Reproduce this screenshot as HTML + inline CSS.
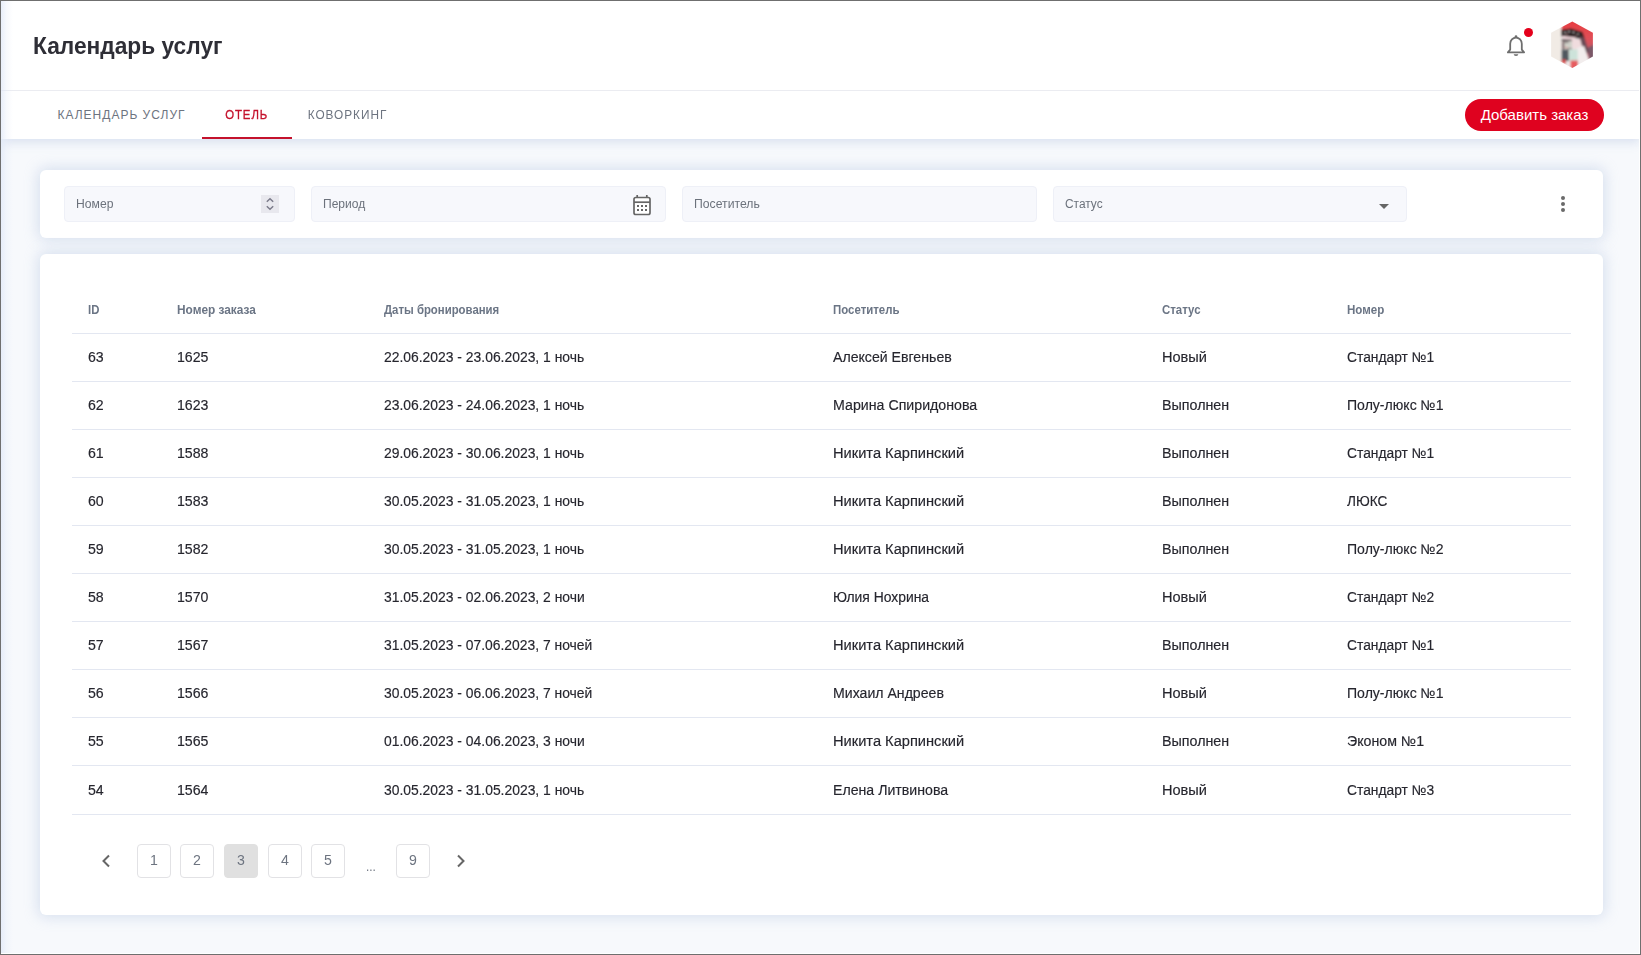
<!DOCTYPE html>
<html lang="ru">
<head>
<meta charset="utf-8">
<title>Календарь услуг</title>
<style>
*{box-sizing:border-box;margin:0;padding:0}
html,body{width:1641px;height:955px;overflow:hidden;background:#f7f9fc}
body{font-family:"Liberation Sans", sans-serif;color:#2d2d35;font-size:14px;position:relative}
.t{display:inline-block;white-space:nowrap;transform-origin:0 50%}
.frame{position:absolute;left:0;top:0;width:1641px;height:955px;border:1px solid #6f6f6f;z-index:50;pointer-events:none}
.frame:after{content:"";position:absolute;left:0;top:0;right:0;bottom:0;border-right:1px solid #fff;border-bottom:1px solid #fff}
.lshadow{position:absolute;left:1px;top:1px;width:12px;height:953px;background:linear-gradient(90deg,rgba(224,232,248,.72),rgba(226,233,248,.28) 45%,rgba(226,233,248,0));z-index:40}
header.top{z-index:2;position:absolute;left:1px;top:1px;width:1639px;height:90px;background:#fff;border-bottom:1px solid #ebecf1}
header.top h1{position:absolute;left:32px;top:30px;font-size:24px;line-height:30px;font-weight:700;color:#2e2e36}
.bell{position:absolute;left:1505px;top:33px;width:22px;height:24px}
.dot{position:absolute;left:1523px;top:27px;width:9px;height:9px;border-radius:50%;background:#e4001b}
.avatar{position:absolute;left:1548px;top:19.200px;width:46px;height:50px}
nav.tabs{position:absolute;left:1px;top:91px;width:1639px;height:48px;background:#fff;box-shadow:0 3px 10px rgba(178,194,224,.45)}
.tab{position:absolute;top:0;height:48px;line-height:48px;font-size:12px;letter-spacing:1px;color:#6d7480;text-align:center}
.tab.active{color:#c4122c;font-weight:500;border-bottom:2px solid #c4122c;-webkit-text-stroke:.3px #c4122c}
.btn{position:absolute;left:1464px;top:8px;width:139px;height:32px;border-radius:16px;background:#df021f;color:#fff;font-size:15px;line-height:31px;text-align:center}
.card{position:absolute;left:40px;width:1563px;background:#fff;border-radius:6px;box-shadow:0 0 14px 2px rgba(170,188,222,.42)}
.filters{top:170px;height:68px}
.inp{position:absolute;top:16px;height:36px;background:#f7f8fc;border:1px solid #eef0f7;border-radius:4px;font-size:12px;line-height:34px;padding-left:11px;color:#6c727c}
.spin{position:absolute;right:15px;top:8px;width:18px;height:18px;background:#e8e8ee}
.tcard{top:254px;height:661px}
table{position:absolute;left:32px;top:32px;width:1499px;border-collapse:collapse;table-layout:fixed}
th,td{text-align:left;padding:0 0 0 16px;height:48px;border-bottom:1px solid #e3e7f1;font-weight:400;vertical-align:middle;white-space:nowrap}
th{font-size:12.5px;font-weight:700;color:#6b7585;height:47px}
td{font-size:14px;color:#26262e;-webkit-text-stroke:.15px #26262e}
tbody tr:last-child td{height:49px}
.pg{position:absolute;top:590px;width:34px;height:34px;border:1px solid #e2e2e5;border-radius:4px;font-size:14px;line-height:30px;text-align:center;color:#6d7480;background:#fff}
.pg.cur{background:#e0e0e0;border-color:#e0e0e0}
.pgi{position:absolute;top:590px;height:34px;line-height:34px;color:#6d7480;font-size:12.500px}
.tab .t,.btn .t,.pg .t{transform-origin:50% 50%}
th .t{position:relative;top:1px}
</style>
</head>
<body>
<header class="top">
  <h1><span class="t" style="transform:scaleX(0.947)">Календарь услуг</span></h1>
  <svg class="bell" viewBox="0 0 22 24"><path d="M1.900 18.400 4.200 15.600V9.800a5.800 6.100 0 0 1 11.600 0v5.800l2.300 2.800z" fill="none" stroke="#6e6e6e" stroke-width="1.800" stroke-linejoin="round"/><circle cx="10" cy="2.500" r="1.350" fill="#6e6e6e"/><path d="M7.700 20.300h4.600a2.300 1.700 0 0 1-4.600 0z" fill="#6e6e6e"/></svg>
  <span class="dot"></span>
  <svg class="avatar" viewBox="0 0 46 50">
    <defs><clipPath id="hex"><polygon points="23.300,1.500 43.900,12.800 43.900,36.400 23.300,48.100 2.100,36.400 2.100,12.800"/></clipPath><filter id="bl" x="-10%" y="-10%" width="120%" height="120%"><feGaussianBlur stdDeviation="0.900"/></filter><linearGradient id="rg" x1="0" y1="0" x2="0" y2="1"><stop offset="0" stop-color="#e8383c"/><stop offset=".45" stop-color="#e05058"/><stop offset="1" stop-color="#a06478"/></linearGradient></defs>
    <g clip-path="url(#hex)"><g filter="url(#bl)">
      <rect x="-4" y="-4" width="54" height="58" fill="#f1ebe5"/>
      <rect x="12.500" y="-4" width="40" height="58" fill="#ece6e6"/>
      <polygon points="12.500,-2 48,-2 48,44 40,44 34,28 30,16 12.500,13" fill="url(#rg)"/>
      <polygon points="38,28 46,24 46,40 41,41" fill="#7a5868"/>
      <polygon points="12.300,9.800 22,8.600 33.500,12 36.500,21 30,18.500 12.300,16.600" fill="#2a2023"/>
      <circle cx="16" cy="12.500" r=".8" fill="#e8e0e0"/><circle cx="20" cy="11.600" r=".8" fill="#e8e0e0"/><circle cx="24.500" cy="12.300" r=".8" fill="#e8e0e0"/><circle cx="29" cy="14" r=".8" fill="#e8e0e0"/><circle cx="18" cy="14.300" r=".7" fill="#d8a0a0"/><circle cx="27" cy="16" r=".7" fill="#d8a0a0"/>
      <polygon points="30.500,16 35.500,18 40,32 36.500,34 32,24" fill="#6a4c56"/>
      <polygon points="13.200,15.800 26.500,17.200 26.300,19.800 13.200,18.400" fill="#ecd2d6"/>
      <polygon points="12.600,19.200 23,19.700 23,21.400 12.600,21" fill="#3a2c30"/>
      <polygon points="13.400,21 22.600,21 23.500,26 20,30.500 14.500,29.500" fill="#cfd0c8"/><polygon points="12.800,21.400 15.200,21.400 15.600,29 12.800,29.500" fill="#8a7678"/>
      <polygon points="14.500,21.600 19.500,21.600 19.500,22.800 14.500,22.800" fill="#6a5a5e"/>
      <polygon points="16,27 18.600,27 18.600,28 16,28" fill="#dc8a8a"/>
      <polygon points="22.600,20 31,19 34,30 24,29" fill="#f0dcde"/>
      <polygon points="28,28 35,26 40,40 32,45 27,40" fill="#f2eded"/>
      <polygon points="12.600,29.500 19.600,29.500 20,41 12.600,41" fill="#4f585e"/><polygon points="18.500,28.500 23,28 23.500,36 20,37" fill="#6a5458"/>
      <polygon points="19.600,29 28.700,29.500 28.700,41 20,41" fill="#cde3da"/>
      <polygon points="12.600,39.500 17,39.500 17,44 12.600,43" fill="#d84a4a"/>
      <polygon points="21.500,40.500 28.900,40.500 28.900,50 21.500,50" fill="#e65c5e"/>
    </g></g>
  </svg>
</header>
<nav class="tabs">
  <div class="tab" style="left:40px;width:161px"><span class="t">КАЛЕНДАРЬ УСЛУГ</span></div>
  <div class="tab active" style="left:201px;width:90px"><span class="t" style="transform:scaleX(0.948)">ОТЕЛЬ</span></div>
  <div class="tab" style="left:290px;width:112px"><span class="t" style="transform:scaleX(0.984)">КОВОРКИНГ</span></div>
  <div class="btn"><span class="t">Добавить заказ</span></div>
</nav>
<section class="card filters">
  <div class="inp" style="left:24px;width:231px"><span class="t" style="transform:scaleX(1.013)">Номер</span><span class="spin"><svg style="display:block" width="18" height="18" viewBox="0 0 18 18"><path d="M5.800 6.700 9 3.700 12.200 6.700M5.800 11.300 9 14.300 12.200 11.300" fill="none" stroke="#7b7b8a" stroke-width="1.500"/></svg></span></div>
  <div class="inp" style="left:271px;width:355px"><span class="t" style="transform:scaleX(1.004)">Период</span>
    <svg style="position:absolute;left:320px;top:7px" width="20" height="22" viewBox="0 0 20 22"><rect x="2" y="3.500" width="16" height="17" rx="1.800" fill="#fff" stroke="#666" stroke-width="1.700"/><path d="M2 8.200h16" stroke="#666" stroke-width="1.700"/><path d="M5.200 1v3M14.800 1v3" stroke="#666" stroke-width="1.700"/><g fill="#666"><rect x="5" y="11" width="2" height="2"/><rect x="9" y="11" width="2" height="2"/><rect x="13" y="11" width="2" height="2"/><rect x="5" y="15" width="2" height="2"/><rect x="9" y="15" width="2" height="2"/><rect x="13" y="15" width="2" height="2"/></g></svg>
  </div>
  <div class="inp" style="left:642px;width:355px"><span class="t" style="transform:scaleX(1.018)">Посетитель</span></div>
  <div class="inp" style="left:1013px;width:354px"><span class="t" style="transform:scaleX(0.992)">Статус</span>
    <svg style="position:absolute;left:324.500px;top:17px" width="10" height="5" viewBox="0 0 10 5"><path d="M0 0h10L5 5z" fill="#666"/></svg>
  </div>
  <svg style="position:absolute;left:1520px;top:25px" width="6" height="18" viewBox="0 0 6 18"><circle cx="3" cy="3" r="2" fill="#6a6a6a"/><circle cx="3" cy="9" r="2" fill="#6a6a6a"/><circle cx="3" cy="15" r="2" fill="#6a6a6a"/></svg>
</section>
<section class="card tcard">
  <table>
    <colgroup><col style="width:89px"><col style="width:207px"><col style="width:449px"><col style="width:329px"><col style="width:185px"><col style="width:240px"></colgroup>
    <thead><tr><th><span class="t" style="transform:scaleX(0.909)">ID</span></th><th><span class="t" style="transform:scaleX(0.948)">Номер заказа</span></th><th><span class="t" style="transform:scaleX(0.910)">Даты бронирования</span></th><th><span class="t" style="transform:scaleX(0.915)">Посетитель</span></th><th><span class="t" style="transform:scaleX(0.915)">Статус</span></th><th><span class="t" style="transform:scaleX(0.926)">Номер</span></th></tr></thead>
    <tbody>
      <tr><td><span class="t" style="transform:scaleX(1.011)">63</span></td><td><span class="t" style="transform:scaleX(1.011)">1625</span></td><td><span class="t" style="transform:scaleX(0.992)">22.06.2023 - 23.06.2023, 1 ночь</span></td><td><span class="t" style="transform:scaleX(1.009)">Алексей Евгеньев</span></td><td><span class="t" style="transform:scaleX(1.040)">Новый</span></td><td><span class="t" style="transform:scaleX(0.987)">Стандарт №1</span></td></tr>
      <tr><td><span class="t" style="transform:scaleX(1.011)">62</span></td><td><span class="t" style="transform:scaleX(1.011)">1623</span></td><td><span class="t" style="transform:scaleX(0.992)">23.06.2023 - 24.06.2023, 1 ночь</span></td><td><span class="t" style="transform:scaleX(1.014)">Марина Спиридонова</span></td><td><span class="t" style="transform:scaleX(1.020)">Выполнен</span></td><td><span class="t" style="transform:scaleX(1.005)">Полу-люкс №1</span></td></tr>
      <tr><td><span class="t" style="transform:scaleX(1.011)">61</span></td><td><span class="t" style="transform:scaleX(1.011)">1588</span></td><td><span class="t" style="transform:scaleX(0.992)">29.06.2023 - 30.06.2023, 1 ночь</span></td><td><span class="t" style="transform:scaleX(1.046)">Никита Карпинский</span></td><td><span class="t" style="transform:scaleX(1.020)">Выполнен</span></td><td><span class="t" style="transform:scaleX(0.987)">Стандарт №1</span></td></tr>
      <tr><td><span class="t" style="transform:scaleX(1.011)">60</span></td><td><span class="t" style="transform:scaleX(1.011)">1583</span></td><td><span class="t" style="transform:scaleX(0.992)">30.05.2023 - 31.05.2023, 1 ночь</span></td><td><span class="t" style="transform:scaleX(1.046)">Никита Карпинский</span></td><td><span class="t" style="transform:scaleX(1.020)">Выполнен</span></td><td><span class="t" style="transform:scaleX(0.973)">ЛЮКС</span></td></tr>
      <tr><td><span class="t" style="transform:scaleX(1.011)">59</span></td><td><span class="t" style="transform:scaleX(1.011)">1582</span></td><td><span class="t" style="transform:scaleX(0.992)">30.05.2023 - 31.05.2023, 1 ночь</span></td><td><span class="t" style="transform:scaleX(1.046)">Никита Карпинский</span></td><td><span class="t" style="transform:scaleX(1.020)">Выполнен</span></td><td><span class="t" style="transform:scaleX(1.005)">Полу-люкс №2</span></td></tr>
      <tr><td><span class="t" style="transform:scaleX(1.011)">58</span></td><td><span class="t" style="transform:scaleX(1.011)">1570</span></td><td><span class="t" style="transform:scaleX(0.992)">31.05.2023 - 02.06.2023, 2 ночи</span></td><td><span class="t" style="transform:scaleX(0.992)">Юлия Нохрина</span></td><td><span class="t" style="transform:scaleX(1.040)">Новый</span></td><td><span class="t" style="transform:scaleX(0.987)">Стандарт №2</span></td></tr>
      <tr><td><span class="t" style="transform:scaleX(1.011)">57</span></td><td><span class="t" style="transform:scaleX(1.011)">1567</span></td><td><span class="t" style="transform:scaleX(0.991)">31.05.2023 - 07.06.2023, 7 ночей</span></td><td><span class="t" style="transform:scaleX(1.046)">Никита Карпинский</span></td><td><span class="t" style="transform:scaleX(1.020)">Выполнен</span></td><td><span class="t" style="transform:scaleX(0.987)">Стандарт №1</span></td></tr>
      <tr><td><span class="t" style="transform:scaleX(1.011)">56</span></td><td><span class="t" style="transform:scaleX(1.011)">1566</span></td><td><span class="t" style="transform:scaleX(0.991)">30.05.2023 - 06.06.2023, 7 ночей</span></td><td><span class="t" style="transform:scaleX(1.008)">Михаил Андреев</span></td><td><span class="t" style="transform:scaleX(1.040)">Новый</span></td><td><span class="t" style="transform:scaleX(1.005)">Полу-люкс №1</span></td></tr>
      <tr><td><span class="t" style="transform:scaleX(1.011)">55</span></td><td><span class="t" style="transform:scaleX(1.011)">1565</span></td><td><span class="t" style="transform:scaleX(0.992)">01.06.2023 - 04.06.2023, 3 ночи</span></td><td><span class="t" style="transform:scaleX(1.046)">Никита Карпинский</span></td><td><span class="t" style="transform:scaleX(1.020)">Выполнен</span></td><td><span class="t" style="transform:scaleX(1.014)">Эконом №1</span></td></tr>
      <tr><td><span class="t" style="transform:scaleX(1.011)">54</span></td><td><span class="t" style="transform:scaleX(1.011)">1564</span></td><td><span class="t" style="transform:scaleX(0.992)">30.05.2023 - 31.05.2023, 1 ночь</span></td><td><span class="t" style="transform:scaleX(1.010)">Елена Литвинова</span></td><td><span class="t" style="transform:scaleX(1.040)">Новый</span></td><td><span class="t" style="transform:scaleX(0.987)">Стандарт №3</span></td></tr>
    </tbody>
  </table>
  <svg style="position:absolute;left:60px;top:600px" width="12" height="14" viewBox="0 0 12 14"><path d="M9 1.500 3.500 7 9 12.500" fill="none" stroke="#666" stroke-width="2"/></svg>
  <div class="pg" style="left:97px"><span class="t" style="transform:scaleX(1.010)">1</span></div>
  <div class="pg" style="left:140px"><span class="t" style="transform:scaleX(1.010)">2</span></div>
  <div class="pg cur" style="left:184px"><span class="t" style="transform:scaleX(1.010)">3</span></div>
  <div class="pg" style="left:228px"><span class="t" style="transform:scaleX(1.010)">4</span></div>
  <div class="pg" style="left:271px"><span class="t" style="transform:scaleX(1.010)">5</span></div>
  <div class="pgi" style="left:326px;top:596px"><span class="t" style="transform:scaleX(0.949)">...</span></div>
  <div class="pg" style="left:356px"><span class="t" style="transform:scaleX(1.010)">9</span></div>
  <svg style="position:absolute;left:415px;top:600px" width="12" height="14" viewBox="0 0 12 14"><path d="M3 1.500 8.500 7 3 12.500" fill="none" stroke="#666" stroke-width="2"/></svg>
</section>
<div class="lshadow"></div>
<div class="frame"></div>
</body>
</html>
